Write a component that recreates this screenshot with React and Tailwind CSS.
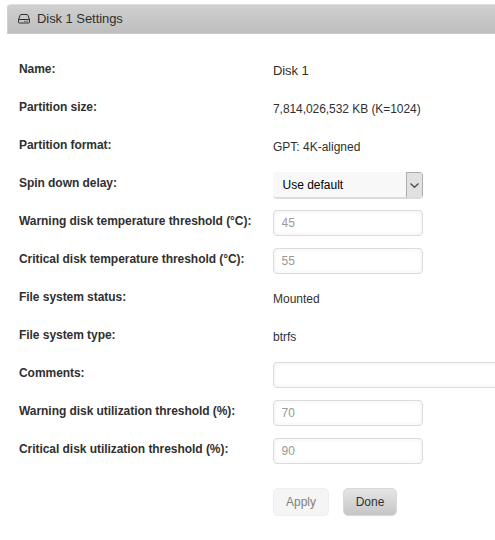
import React from "react";

const fields = [
  { label: "Name:", type: "title", value: "Disk 1" },
  { label: "Partition size:", type: "number", value: "7,814,026,532 KB (K=1024)" },
  { label: "Partition format:", type: "text", value: "GPT: 4K-aligned" },
  { label: "Spin down delay:", type: "select", value: "Use default" },
  { label: "Warning disk temperature threshold (°C):", type: "input", placeholder: "45" },
  { label: "Critical disk temperature threshold (°C):", type: "input", placeholder: "55" },
  { label: "File system status:", type: "text", value: "Mounted" },
  { label: "File system type:", type: "text", value: "btrfs" },
  { label: "Comments:", type: "wide" },
  { label: "Warning disk utilization threshold (%):", type: "input", placeholder: "70" },
  { label: "Critical disk utilization threshold (%):", type: "input", placeholder: "90" },
];

const DiskIcon = () => (
  <svg width="12" height="11" viewBox="0 0 12 11" fill="none" stroke="currentColor" className="mr-[7px] shrink-0">
    <path d="M.5 5.7 2.1 1.2Q2.3.5 3 .5H9Q9.7.5 9.9 1.2L11.5 5.7V8.3Q11.5 9 10.8 9H1.2Q.5 9 .5 8.3Z" />
    <path d="M.5 5.5H11.5" />
    <path d="M6.3 7.3H7.5M8.5 7.3H9.7" strokeWidth="1.1" />
  </svg>
);

const TextInput = ({ placeholder, wide }) => (
  <input
    type="text"
    placeholder={placeholder}
    className={`mt-[8px] block h-[26px] shrink-0 rounded-[4px] border border-[#dcdcdc] bg-white px-[7.5px] text-[12px] shadow-[inset_0_0_5px_#eeeeee] outline-none placeholder:text-[#999999] ${wide ? "w-[300px]" : "w-[150px]"}`}
  />
);

const SelectBox = ({ value }) => (
  <button
    type="button"
    className="mt-[8px] flex h-[27px] w-[150px] overflow-hidden rounded-[4px] border-b-2 border-[#dcdcdc] bg-[#f8f8f8] text-left text-[12px] leading-[27px] text-black"
  >
    <span className="flex-1 pl-[9.5px]">{value}</span>
    <span className="flex h-[26px] w-[17px] items-center justify-center border border-[#adadad] bg-[#e1e1e1]">
      <svg width="9" height="5" viewBox="0 0 9 5" fill="none" stroke="#444444" strokeWidth="1.2" className="mr-px shrink-0">
        <path d="M.5.5 4.5 4.3 8.5.5" />
      </svg>
    </span>
  </button>
);

const FieldControl = ({ field }) => {
  if (field.type === "select") return <SelectBox value={field.value} />;
  if (field.type === "input") return <TextInput placeholder={field.placeholder} />;
  if (field.type === "wide") return <TextInput wide />;
  if (field.type === "title") return <span className="pt-[11px] text-[13px] leading-[20px] tracking-[-0.1px]">{field.value}</span>;
  if (field.type === "number") return <span className="pt-[11px] leading-[20px] tracking-[-0.06px]">{field.value}</span>;
  return <span className="pt-[11px] leading-[20px]">{field.value}</span>;
};

const App = () => {
  return (
    <div className="h-[540px] w-full overflow-hidden bg-white pt-1 font-['Liberation_Sans',Arial,sans-serif] text-[12px] text-[#303030]">
      {/* Panel header */}
      <div className="ml-[7px] flex h-[30px] items-center rounded-tl-[4px] border-t border-b border-l border-t-[#e0e0e0] border-b-[#c8c8c8] border-l-[#d0d0d0] bg-linear-to-b from-[#d0d0d0] to-[#bebebe] pl-[10px] text-[13px]">
        <DiskIcon />
        <span className="tracking-[-0.06px]">Disk 1 Settings</span>
      </div>

      {/* Settings */}
      <div className="pt-4 pl-[19px]">
        {fields.map((field) => (
          <div key={field.label} className="flex h-[38px]">
            <label className="w-[254px] shrink-0 pt-[9px] leading-[20px] font-bold tracking-[-0.05px]">{field.label}</label>
            <FieldControl field={field} />
          </div>
        ))}
      </div>

      {/* Actions */}
      <div className="flex gap-[14px] pt-5 pl-[273px]">
        <button type="button" disabled className="h-7 w-[56px] rounded-[5px] border border-[#eeeeee] bg-[#f5f5f5] text-[12px] text-[#808080]">
          Apply
        </button>
        <button type="button" className="h-7 w-[54px] rounded-[5px] border border-[#d8d8d8] bg-linear-to-b from-[#e5e5e5] to-[#c6c6c6] text-[12px]">
          Done
        </button>
      </div>
    </div>
  );
};

export default App;
